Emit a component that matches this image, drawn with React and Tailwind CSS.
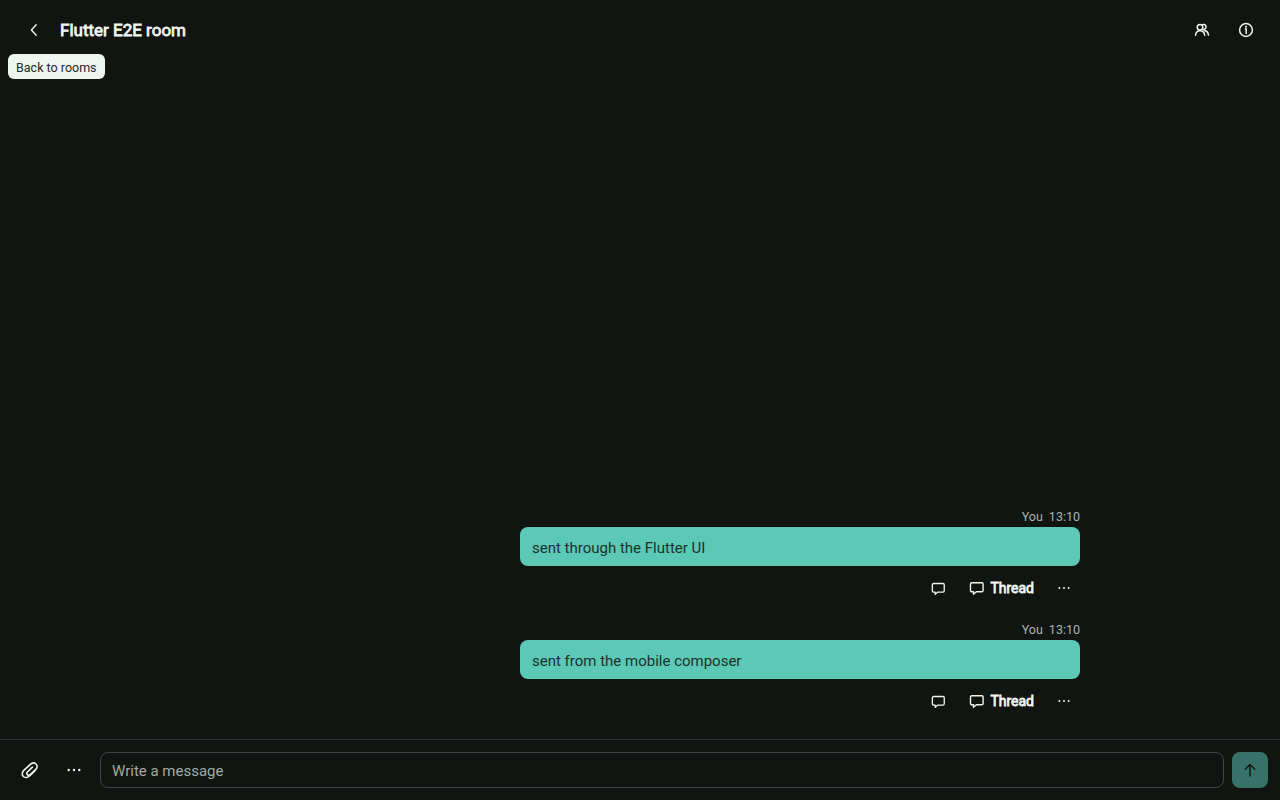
import React from "react";

function ChevronLeft() {
  return (
    <svg width="20" height="20" viewBox="0 0 20 20" fill="none" stroke="currentColor" strokeWidth="1.4" strokeLinecap="round" strokeLinejoin="round">
      <path d="M12.2 4.7 7.4 10l4.8 5.3" />
    </svg>
  );
}

function Members() {
  return (
    <svg width="20" height="20" viewBox="0 0 20 20" fill="none" stroke="currentColor" strokeWidth="1.5" strokeLinecap="round">
      <circle cx="8" cy="7.3" r="2.8" />
      <path d="M10.2 4.800a2.500 2.500 0 1 1 1.400 4.600" />
      <path d="M3.500 15.300c.3-3 2-4.600 4.600-4.600s4.300 1.600 4.600 4.600" />
      <path d="M12.300 10.400c2.300.3 3.900 2.100 4.200 4.700" />
    </svg>
  );
}

function Info() {
  return (
    <svg width="20" height="20" viewBox="0 0 20 20" fill="none" stroke="currentColor" strokeWidth="1.5">
      <circle cx="10" cy="10" r="6.400" />
      <path d="M8.900 9h1.300v4.900" strokeWidth="1.500" />
      <circle cx="10" cy="6.700" r="1" fill="currentColor" stroke="none" />
    </svg>
  );
}

function Bubble({ size }) {
  return (
    <svg width={size} height={size} viewBox="0 0 18 18" fill="none" stroke="currentColor" strokeWidth="1.400" strokeLinejoin="round">
      <path d="M3.800 3.700h10a1.300 1.300 0 0 1 1.300 1.300v6.500a1.300 1.300 0 0 1-1.300 1.300H8.300L5.500 15.200V12.800H3.800a1.300 1.300 0 0 1-1.300-1.300V5A1.300 1.300 0 0 1 3.800 3.700Z" />
    </svg>
  );
}

function Dots({ gap, r }) {
  return (
    <svg width="20" height="20" viewBox="0 0 20 20" fill="currentColor">
      <circle cx={10 - gap} cy="10" r={r} />
      <circle cx="10" cy="10" r={r} />
      <circle cx={10 + gap} cy="10" r={r} />
    </svg>
  );
}

function Paperclip() {
  return (
    <svg width="20" height="20" viewBox="0 0 20 20" fill="none" stroke="currentColor" strokeWidth="1.600" strokeLinecap="round">
      <path d="M14.800 11 9.800 15.700C7.900 17.600 5.100 18 3.400 16.500S1.900 12.300 3.800 10.400l6-5.600c2-1.900 4.600-2.200 6.200-.8s1.500 3.700-.2 5.400l-5.300 5c-1 .9-2.300 1-3.100.2s-.7-2 .2-2.900l4.800-4.500" />
    </svg>
  );
}

function ArrowUp() {
  return (
    <svg width="20" height="20" viewBox="0 0 20 20" fill="none" stroke="currentColor" strokeWidth="1.400" strokeLinecap="round" strokeLinejoin="round">
      <path d="M10 16V4.400M5.200 9.200l4.800-4.800 4.800 4.800" />
    </svg>
  );
}

function Message({ text, time }) {
  return (
    <article className="flex w-[560px] flex-col">
      <div className="flex h-[18px] items-center justify-end gap-[6px] pb-[2px] text-[12.5px] leading-4 text-[#a9b4ae]">
        <span>You</span>
        <span>{time}</span>
      </div>
      <p className="flex h-[39px] items-center rounded-lg bg-[#5cc8b6] px-3 pt-[3px] text-[15px] leading-5 text-[#1a332d]">{text}</p>
      <div className="-mr-1.5 flex h-11 items-center justify-end">
        <button className="flex h-11 w-11 items-center justify-center"><Bubble size={17} /></button>
        <button className="flex h-11 items-center gap-1 px-2">
          <Bubble size={18} />
          <span className="text-[14px] [-webkit-text-stroke:0.8px_#eff5f1]">Thread</span>
        </button>
        <button className="flex h-11 w-11 items-center justify-center"><Dots gap={4.6} r={1} /></button>
      </div>
    </article>
  );
}

export default function App() {
  return (
    <div className="flex h-screen w-full flex-col bg-[#111512] font-[Roboto,sans-serif] text-[#eff5f1]">
      <header className="relative flex h-[60px] shrink-0 items-center justify-between px-3">
        <div className="flex items-center">
          <button className="flex h-11 w-11 items-center justify-center"><ChevronLeft /></button>
          <h1 className="pl-1 text-[17px] leading-6 [-webkit-text-stroke:0.8px_#eff5f1]">Flutter E2E room</h1>
        </div>
        <div className="flex items-center">
          <button className="flex h-11 w-11 items-center justify-center"><Members /></button>
          <button className="flex h-11 w-11 items-center justify-center"><Info /></button>
        </div>
        <div className="absolute top-[54px] left-2 flex h-[25px] w-[96.5px] items-center rounded-md bg-[#eff5f1] pt-[2px] pl-2 text-[12.5px] leading-4 whitespace-nowrap text-[#252a27]">Back to rooms</div>
      </header>
      <main className="mx-auto flex min-h-0 w-[880px] flex-1 flex-col items-end justify-end gap-3 pb-4">
        <Message text="sent through the Flutter UI" time="13:10" />
        <Message text="sent from the mobile composer" time="13:10" />
      </main>
      <footer className="flex h-[61px] shrink-0 items-center border-t border-[#2e3532] pr-3 pl-2">
        <button className="flex h-11 w-11 items-center justify-center"><Paperclip /></button>
        <button className="flex h-11 w-11 items-center justify-center"><Dots gap={5.3} r={1.2} /></button>
        <div className="ml-1 flex h-9 flex-1 items-center rounded-lg border border-[#3e4743] px-[11px] pt-[2px] text-[15px] text-[#a0aba5]">Write a message</div>
        <button className="ml-2 flex h-9 w-9 items-center justify-center rounded-lg bg-[#377268] text-[#111512]"><ArrowUp /></button>
      </footer>
    </div>
  );
}
